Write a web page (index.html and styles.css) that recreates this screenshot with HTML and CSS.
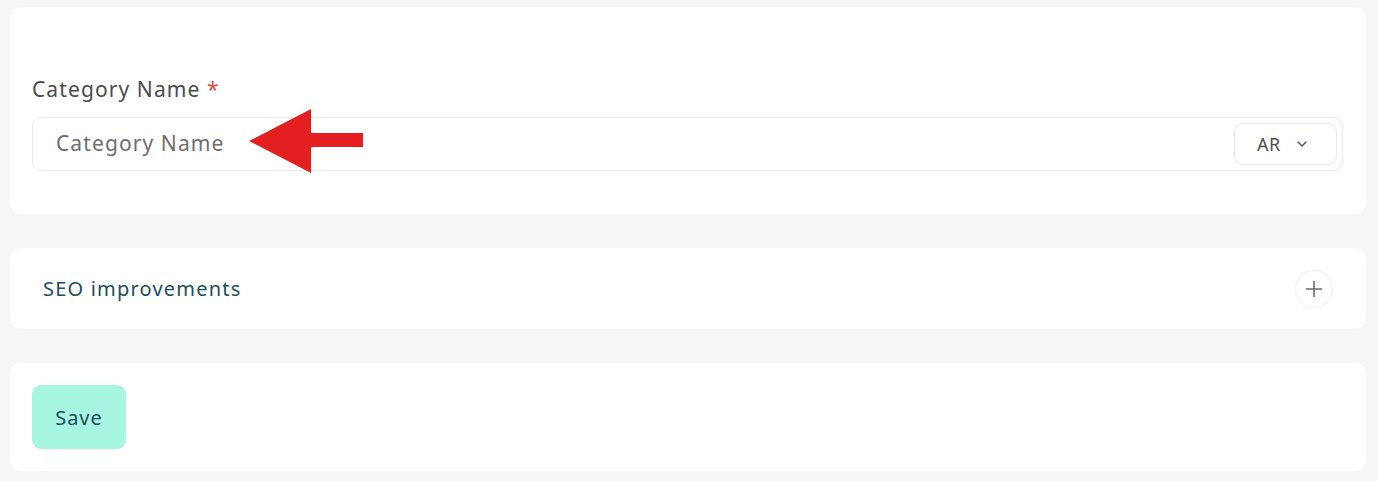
FILE: index.html
```html
<!DOCTYPE html>
<html lang="en">
<head>
<meta charset="utf-8">
<title>Category</title>
<link rel="stylesheet" href="styles.css">
</head>
<body>
<main class="page">
  <section class="card card-name">
    <label class="label" for="cat">Category Name <span class="req">*</span></label>
    <div class="field">
      <input id="cat" class="input" type="text" placeholder="Category Name">
      <button class="lang" type="button">AR
        <svg class="chev" width="14" height="14" viewBox="0 0 14 14"><path d="M3 5l4 4 4-4" fill="none" stroke="#4a5560" stroke-width="1.4" stroke-linecap="round" stroke-linejoin="round"/></svg>
      </button>
      <svg class="arrow" width="116" height="64" viewBox="0 0 116 64"><path d="M0 32 L62 0 L62 24 L114 24 L114 38 L62 38 L62 64 Z" fill="#e41f1f"/></svg>
    </div>
  </section>
  <section class="card card-seo">
    <span class="seo-title">SEO improvements</span>
    <button class="plus" type="button">
      <svg width="18" height="18" viewBox="0 0 18 18"><path d="M9 1v16M1 9h16" stroke="#6b7068" stroke-width="1.6"/></svg>
    </button>
  </section>
  <section class="card card-save">
    <button class="save" type="button">Save</button>
  </section>
</main>
</body>
</html>
```
FILE: styles.css
```css
* { box-sizing: border-box; }
html, body { margin: 0; padding: 0; background: #f6f6f6; }
body { font-family: "Noto Sans", "DejaVu Sans", sans-serif; }
.page {
  display: flex;
  flex-direction: column;
  gap: 34px;
  padding: 7px 12px 10px 10px;
}
.card {
  background: #ffffff;
  border-radius: 11px;
}
.card-name {
  height: 207px;
  padding: 69px 23px 0 22px;
  display: flex;
  flex-direction: column;
}
.label {
  font-size: 21px;
  line-height: 26px;
  letter-spacing: 1.1px;
  color: #4b4b4b;
  margin-bottom: 15px;
}
.req { color: #e5463c; }
.field {
  position: relative;
  height: 54px;
  border: 1px solid #e9e9e9;
  border-radius: 9px;
  display: flex;
  align-items: center;
  padding: 0 5px 0 23px;
}
.input {
  flex: 1;
  border: none;
  outline: none;
  background: transparent;
  font-family: inherit;
  font-size: 21px;
  letter-spacing: 1.1px;
  color: #333;
  padding: 0;
  margin-top: -2px;
}
.input::placeholder { color: #6e6e6e; }
.lang {
  width: 103px;
  height: 42px;
  border: 1px solid #e8e8e8;
  border-radius: 9px;
  background: #fff;
  display: flex;
  align-items: center;
  padding: 0 0 0 22px;
  gap: 14px;
  font-family: inherit;
  font-size: 18px;
  letter-spacing: 0.5px;
  color: #4f4f4f;
}
.arrow {
  position: absolute;
  left: 216px;
  top: -9px;
}
.card-seo {
  height: 81px;
  display: flex;
  align-items: center;
  justify-content: space-between;
  padding: 0 33px 0 33px;
}
.seo-title {
  font-size: 20px;
  letter-spacing: 1.2px;
  color: #1c4f5c;
}
.plus {
  width: 38px;
  height: 38px;
  border-radius: 50%;
  border: 1px solid #efefef;
  background: #fff;
  display: flex;
  align-items: center;
  justify-content: center;
  padding: 0;
}
.card-save {
  height: 108px;
  display: flex;
  align-items: center;
  padding: 0 22px;
}
.save {
  width: 94px;
  height: 64px;
  border: none;
  border-radius: 9px;
  background: #a6f6e2;
  font-family: inherit;
  font-size: 20px;
  letter-spacing: 1px;
  color: #1c4f5c;
}
```
